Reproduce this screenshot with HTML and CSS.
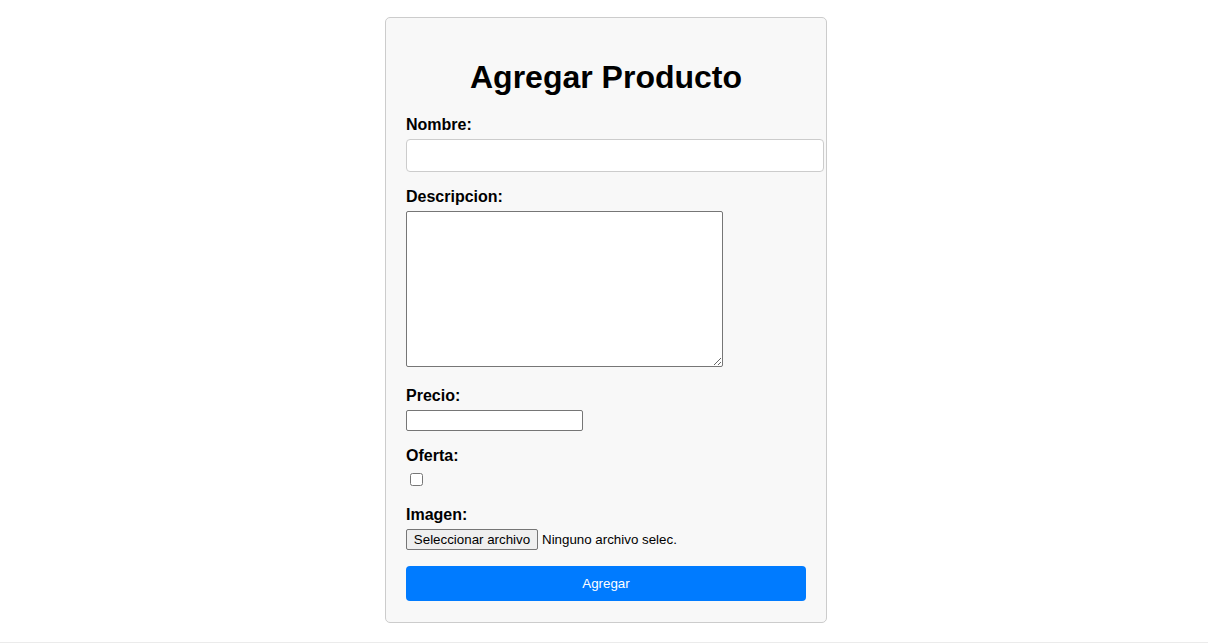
FILE: index.html
```html
<!DOCTYPE html>
<html lang="es">
<head>
<meta charset="utf-8">
<title>Agregar Producto</title>
<link rel="stylesheet" href="styles.css">
</head>
<body>
<div class="form-container">
  <h1 class="title">Agregar Producto</h1>
  <form class="product-form">
    <label class="field-label" for="nombre">Nombre:</label>
    <input class="text-input" type="text" id="nombre">

    <label class="field-label" for="descripcion">Descripcion:</label>
    <textarea class="textarea" id="descripcion"></textarea>

    <label class="field-label" for="precio">Precio:</label>
    <input class="number-input" type="text" id="precio">

    <label class="field-label" for="oferta">Oferta:</label>
    <div class="check-row"><input class="checkbox" type="checkbox" id="oferta"></div>

    <label class="field-label">Imagen:</label>
    <div class="file-row">
      <span class="file-button">Seleccionar archivo</span>
      <span class="file-name">Ninguno archivo selec.</span>
    </div>

    <button class="submit-button" type="button">Agregar</button>
  </form>
</div>
<div class="page-end"></div>
</body>
</html>
```

FILE: styles.css
```css
html, body {
  margin: 0;
  padding: 0;
  background: #ffffff;
}

body {
  font-family: "Liberation Sans", Arial, sans-serif;
  color: #000;
}

.form-container {
  width: 400px;
  margin: 17px auto 19px;
  padding: 20px 20px 21px;
  border: 1px solid #cccccc;
  border-radius: 5px;
  background: #f8f8f8;
  position: relative;
  left: 2px;
}

.title {
  font-size: 32px;
  font-weight: bold;
  text-align: center;
  margin: 21px 0 20px;
  line-height: 37px;
}

.product-form {
  display: flex;
  flex-direction: column;
  align-items: flex-start;
}

.field-label {
  display: block;
  font-size: 16px;
  font-weight: bold;
  line-height: 18px;
  margin-bottom: 5px;
}

.text-input {
  width: 400px;
  box-sizing: content-box;
  height: 15px;
  padding: 8px;
  border: 1px solid #cccccc;
  border-radius: 4px;
  background: #fff;
  margin: 0 0 16px;
  font-family: "Liberation Sans", Arial, sans-serif;
  font-size: 13.33px;
}

.textarea {
  display: block;
  box-sizing: border-box;
  width: 317px;
  height: 156px;
  margin: 0 0 20px;
  border: 1px solid #767676;
  border-radius: 2px;
  background: #fff;
  padding: 2px;
  font-family: "Liberation Mono", monospace;
  font-size: 13.33px;
}

.number-input {
  box-sizing: border-box;
  width: 177px;
  height: 21px;
  margin: 0 0 16px;
  padding: 1px 2px;
  border: 1px solid #767676;
  border-radius: 2px;
  background: #fff;
  font-family: "Liberation Sans", Arial, sans-serif;
  font-size: 13.33px;
}

.check-row {
  height: 19px;
  margin-bottom: 17px;
  display: flex;
  align-items: flex-start;
}

.checkbox {
  width: 13px;
  height: 13px;
  margin: 3px 3px 3px 4px;
}

.file-row {
  display: flex;
  align-items: center;
  height: 21px;
  margin-bottom: 16px;
  font-size: 13.33px;
}

.file-button {
  box-sizing: border-box;
  height: 21px;
  width: 132px;
  padding: 1px 6px;
  border: 1px solid #767676;
  border-radius: 2px;
  background: #efefef;
  color: #000;
  line-height: 17px;
  text-align: center;
  white-space: nowrap;
}

.file-name {
  margin-left: 4px;
  white-space: nowrap;
}

.submit-button {
  width: 400px;
  height: 35px;
  padding: 10px;
  border: none;
  border-radius: 4px;
  background: #007bff;
  color: #ffffff;
  font-family: "Liberation Sans", Arial, sans-serif;
  font-size: 13.33px;
  cursor: pointer;
}

.page-end {
  border-top: 1px solid #ebebeb;
}
```
